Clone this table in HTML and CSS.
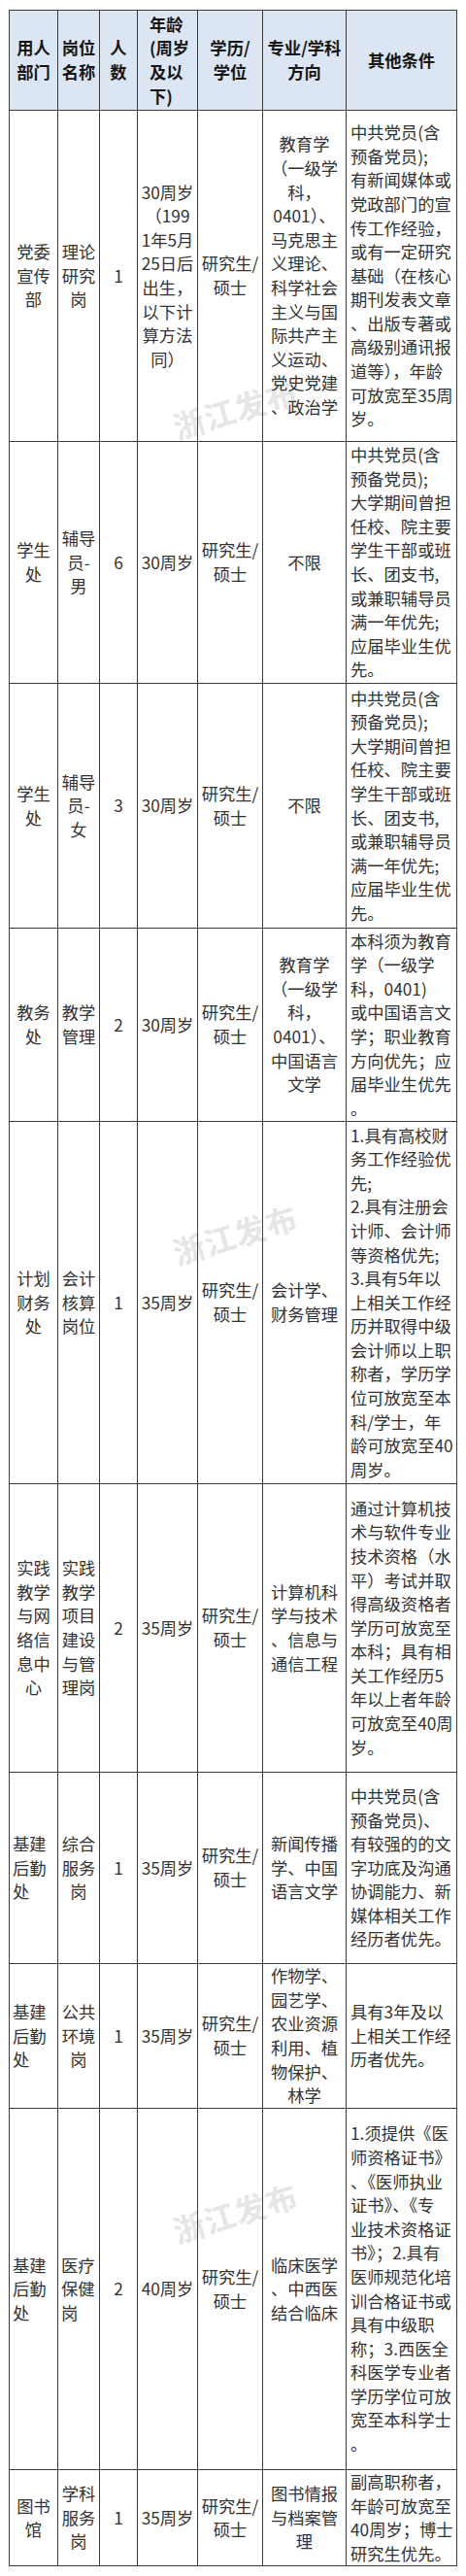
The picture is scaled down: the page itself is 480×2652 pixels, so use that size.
FILE: index.html
```html
<!DOCTYPE html>
<html lang="zh-CN">
<head>
<meta charset="utf-8">
<title>招聘岗位表</title>
<link rel="stylesheet" href="styles.css">
</head>
<body>
<div class="page">
  <div class="wm wm1">浙江发布</div>
  <div class="wm wm2">浙江发布</div>
  <div class="wm wm3">浙江发布</div>
  <table class="jobs">
    <colgroup>
      <col class="c-dept"><col class="c-post"><col class="c-num"><col class="c-age"><col class="c-edu"><col class="c-major"><col class="c-cond">
    </colgroup>
    <thead>
      <tr class="h0">
        <th>用人<br>部门</th>
        <th>岗位<br>名称</th>
        <th>人<br>数</th>
        <th class="th-age">年龄<br>(周岁<br>及以<br>下)</th>
        <th>学历/<br>学位</th>
        <th>专业/学科<br>方向</th>
        <th>其他条件</th>
      </tr>
    </thead>
    <tbody>
      <tr class="h1">
        <td>党委<br>宣传<br>部</td>
        <td>理论<br>研究<br>岗</td>
        <td>1</td>
        <td>30周岁<br>（199<br>1年5月<br>25日后<br>出生，<br>以下计<br>算方法<br>同）</td>
        <td>研究生/<br>硕士</td>
        <td>教育学<br>（一级学<br>科，<br>0401）、<br>马克思主<br>义理论、<br>科学社会<br>主义与国<br>际共产主<br>义运动、<br>党史党建<br>、政治学</td>
        <td class="cond">中共党员(含<br>预备党员);<br>有新闻媒体或<br>党政部门的宣<br>传工作经验，<br>或有一定研究<br>基础（在核心<br>期刊发表文章<br>、出版专著或<br>高级别通讯报<br>道等），年龄<br>可放宽至35周<br>岁。</td>
      </tr>
      <tr class="h2">
        <td>学生<br>处</td>
        <td>辅导<br>员-<br>男</td>
        <td>6</td>
        <td>30周岁</td>
        <td>研究生/<br>硕士</td>
        <td>不限</td>
        <td class="cond">中共党员(含<br>预备党员);<br>大学期间曾担<br>任校、院主要<br>学生干部或班<br>长、团支书,<br>或兼职辅导员<br>满一年优先;<br>应届毕业生优<br>先。</td>
      </tr>
      <tr class="h3">
        <td>学生<br>处</td>
        <td>辅导<br>员-<br>女</td>
        <td>3</td>
        <td>30周岁</td>
        <td>研究生/<br>硕士</td>
        <td>不限</td>
        <td class="cond">中共党员(含<br>预备党员);<br>大学期间曾担<br>任校、院主要<br>学生干部或班<br>长、团支书,<br>或兼职辅导员<br>满一年优先;<br>应届毕业生优<br>先。</td>
      </tr>
      <tr class="h4">
        <td>教务<br>处</td>
        <td>教学<br>管理</td>
        <td>2</td>
        <td>30周岁</td>
        <td>研究生/<br>硕士</td>
        <td>教育学<br>（一级学<br>科，<br>0401）、<br>中国语言<br>文学</td>
        <td class="cond">本科须为教育<br>学（一级学<br>科，0401)<br>或中国语言文<br>学；职业教育<br>方向优先；应<br>届毕业生优先<br>。</td>
      </tr>
      <tr class="h5">
        <td>计划<br>财务<br>处</td>
        <td>会计<br>核算<br>岗位</td>
        <td>1</td>
        <td>35周岁</td>
        <td>研究生/<br>硕士</td>
        <td>会计学、<br>财务管理</td>
        <td class="cond">1.具有高校财<br>务工作经验优<br>先;<br>2.具有注册会<br>计师、会计师<br>等资格优先;<br>3.具有5年以<br>上相关工作经<br>历并取得中级<br>会计师以上职<br>称者，学历学<br>位可放宽至本<br>科/学士，年<br>龄可放宽至40<br>周岁。</td>
      </tr>
      <tr class="h6">
        <td>实践<br>教学<br>与网<br>络信<br>息中<br>心</td>
        <td>实践<br>教学<br>项目<br>建设<br>与管<br>理岗</td>
        <td>2</td>
        <td>35周岁</td>
        <td>研究生/<br>硕士</td>
        <td>计算机科<br>学与技术<br>、信息与<br>通信工程</td>
        <td class="cond">通过计算机技<br>术与软件专业<br>技术资格（水<br>平）考试并取<br>得高级资格者<br>学历可放宽至<br>本科；具有相<br>关工作经历5<br>年以上者年龄<br>可放宽至40周<br>岁。</td>
      </tr>
      <tr class="h7">
        <td class="left">基建<br>后勤<br>处</td>
        <td>综合<br>服务<br>岗</td>
        <td>1</td>
        <td>35周岁</td>
        <td>研究生/<br>硕士</td>
        <td>新闻传播<br>学、中国<br>语言文学</td>
        <td class="cond">中共党员(含<br>预备党员)、<br>有较强的的文<br>字功底及沟通<br>协调能力、新<br>媒体相关工作<br>经历者优先。</td>
      </tr>
      <tr class="h8">
        <td class="left">基建<br>后勤<br>处</td>
        <td>公共<br>环境<br>岗</td>
        <td>1</td>
        <td>35周岁</td>
        <td>研究生/<br>硕士</td>
        <td>作物学、<br>园艺学、<br>农业资源<br>利用、植<br>物保护、<br>林学</td>
        <td class="cond">具有3年及以<br>上相关工作经<br>历者优先。</td>
      </tr>
      <tr class="h9">
        <td class="left">基建<br>后勤<br>处</td>
        <td class="left">医疗<br>保健<br>岗</td>
        <td>2</td>
        <td>40周岁</td>
        <td>研究生/<br>硕士</td>
        <td>临床医学<br>、中西医<br>结合临床</td>
        <td class="cond">1.须提供《医<br>师资格证书》<br>、《医师执业<br>证书》、《专<br>业技术资格证<br>书》；2.具有<br>医师规范化培<br>训合格证书或<br>具有中级职<br>称；3.西医全<br>科医学专业者<br>学历学位可放<br>宽至本科学士<br>。</td>
      </tr>
      <tr class="h10">
        <td>图书<br>馆</td>
        <td>学科<br>服务<br>岗</td>
        <td>1</td>
        <td>35周岁</td>
        <td>研究生/<br>硕士</td>
        <td>图书情报<br>与档案管<br>理</td>
        <td class="cond">副高职称者，<br>年龄可放宽至<br>40周岁；博士<br>研究生优先。</td>
      </tr>
    </tbody>
  </table>
</div>
</body>
</html>
```

FILE: styles.css
```css
html, body {
  margin: 0;
  padding: 0;
  background: #ffffff;
}

body {
  font-family: "Noto Sans CJK SC", "Noto Sans", "Liberation Sans", sans-serif;
  color: #333333;
}

.page {
  position: relative;
  padding: 10px 10px 11px 9px;
}

.jobs {
  position: relative;
  z-index: 1;
  border-collapse: collapse;
  table-layout: fixed;
  width: 461px;
  font-size: 17.3px;
  line-height: 24.6px;
}

.c-dept { width: 50px; }
.c-post { width: 43px; }
.c-num { width: 39px; }
.c-age { width: 62px; }
.c-edu { width: 67px; }
.c-major { width: 86px; }
.c-cond { width: 114px; }

.jobs th,
.jobs td {
  border: 1px solid #3c3c3c;
  padding: 0 2px;
  text-align: center;
  vertical-align: middle;
  white-space: nowrap;
  overflow: visible;
}

.jobs th {
  background: #dce6f2;
  color: #161616;
  font-weight: 700;
}

.jobs th.th-age {
  text-align: left;
  padding-left: 12px;
}

.jobs td.cond {
  text-align: left;
  padding-left: 4px;
  padding-right: 1px;
}

.jobs td.left {
  text-align: left;
  padding-left: 3px;
}

.h0 { height: 103px; }
.h1 { height: 341px; }
.h2 { height: 249px; }
.h3 { height: 252px; }
.h4 { height: 199px; }
.h5 { height: 373px; }
.h6 { height: 297px; }
.h7 { height: 197px; }
.h8 { height: 149px; }
.h9 { height: 372px; }
.h10 { height: 99px; }

.wm {
  position: absolute;
  z-index: 0;
  left: 176px;
  font-size: 32px;
  line-height: 36px;
  font-weight: 700;
  letter-spacing: 1px;
  color: #e6e6e6;
  transform: rotate(-17deg);
  white-space: nowrap;
  pointer-events: none;
}

.wm1 { top: 402px; }
.wm2 { top: 1252px; }
.wm3 { top: 2259px; }
```
